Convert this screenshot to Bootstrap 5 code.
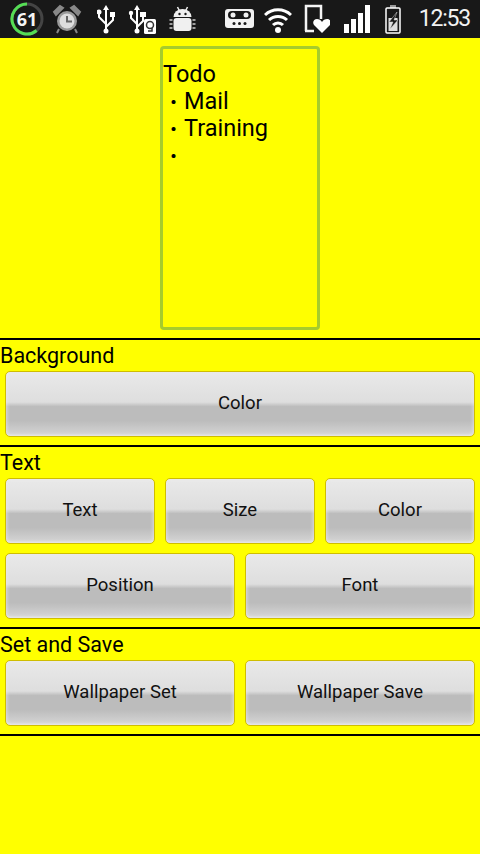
<!DOCTYPE html>
<html><head><meta charset="utf-8"><title>Wallpaper memo</title>
<link rel="stylesheet" href="https://cdn.jsdelivr.net/npm/bootstrap@5.3.0/dist/css/bootstrap.min.css">
<style>
html,body{height:854px;overflow:hidden}
body{background:#ff0;font-family:Roboto,"Noto Sans",sans-serif;color:#000}
.sbar{height:38px;background:#181818;color:#fff;padding:0 10px}
.sbar svg{display:block;flex:none}
.clock{font-size:23px;letter-spacing:-1.2px;line-height:38px;margin-left:auto;color:#f2f2f2;font-family:Roboto,sans-serif}
.stage{height:300px;padding-top:8px}
.memo{width:160px;height:284px;border:3px solid #a6cc2c;border-radius:4px;font-size:23.5px;line-height:27px;padding-top:12px}
.mline{height:27px;white-space:nowrap}
.bul{width:21px;flex:none;font-size:16px;font-family:"Noto Sans CJK JP",sans-serif;font-weight:700;text-align:center}
.sect{border-top:2px solid #000;padding:0 5px 6px}
.lbl{font-size:21.5px;line-height:28px;margin:0 -5px;height:31px;padding-top:2px}
.gbtn{height:66px;flex:1 1 0;min-width:0;padding:0 0 1px;border:1px solid #cfbd00;border-radius:5px;font-size:18.5px;color:#111;
background:linear-gradient(#e9e9e9 0,#dedede 47%,#bcbcbc 54%,#bcbcbc 76%,#d2d2d2 96%,#e2e2e2 100%);box-shadow:inset 0 0 4px #ececec}
.gbtn:hover,.gbtn:focus{color:#111;border-color:#cfbd00;background:linear-gradient(#e9e9e9 0,#dedede 47%,#bcbcbc 54%,#bcbcbc 76%,#d2d2d2 96%,#e2e2e2 100%)}
.rowg{gap:10px}
.rowg+.rowg{margin-top:9px}
.s-1{height:107px}.s-2{height:182px}.s-3{height:107px}
.endline{border-top:2px solid #000}
.ic-usb1{margin-left:15px}.ic-usb2{margin-left:13px}.ic-droid{margin-left:11px}.ic-vm{margin-left:29px}
.ic-wifi{margin-left:10px}.ic-heart{margin-left:12px}.ic-sig{margin-left:14px}.ic-bat{margin-left:15px}
</style></head><body>
<div class="sbar d-flex align-items-center">
<svg width="38" height="38" viewBox="0 0 38 38"><circle cx="17" cy="19" r="15" fill="none" stroke="#444" stroke-width="3"/><path d="M17 4A15 15 0 1 0 26.600 30.500" fill="none" stroke="#55dd55" stroke-width="3"/><text x="17" y="25.500" font-size="18" font-weight="700" fill="#f4f4f4" text-anchor="middle" font-family="Open Sans">61</text></svg>
<svg class="ms-1" width="30" height="32" viewBox="0 0 30 32"><circle cx="15" cy="18" r="10" fill="#999"/><circle cx="15" cy="18" r="7.500" fill="#ddd"/><path d="M15 13v5.500h5" fill="none" stroke="#666" stroke-width="2"/><path d="M2 9 8 3l3 2-7 7zM28 9l-6-6-3 2 7 7zM7 26l-2 4M23 26l2 4" fill="#888" stroke="#888" stroke-width="2"/></svg>
<svg class="ic-usb1" width="18" height="30" viewBox="1 0 18 30"><path d="M10 27V3M10 20 3 13V9M10 23l7-7v-5" fill="none" stroke="#fff" stroke-width="2"/><path d="M10 1l3 5H7z" fill="#fff"/><circle cx="10" cy="27" r="2.500" fill="#fff"/><circle cx="3" cy="8" r="2.500" fill="#fff"/><rect x="14" y="8" width="6" height="5" fill="#fff"/></svg>
<svg class="ic-usb2" width="30" height="30" viewBox="0 0 30 30"><path d="M9 27V3M9 20 3 14v-4M9 23l6-6v-5" fill="none" stroke="#fff" stroke-width="2"/><path d="M9 1l3 5H6z" fill="#fff"/><circle cx="9" cy="27" r="2.500" fill="#fff"/><circle cx="3" cy="9" r="2.200" fill="#fff"/><rect x="12" y="8" width="6" height="5" fill="#fff"/><rect x="16" y="15" width="12" height="15" rx="1.500" fill="#fff"/><circle cx="22" cy="21" r="3.500" fill="none" stroke="#333" stroke-width="1.500"/><path d="M24 24v3h-4" fill="none" stroke="#333" stroke-width="1.500"/></svg>
<svg class="ic-droid" width="27" height="28" viewBox="0 0 26 28"><path d="M4 12a9 8 0 0 1 18 0z" fill="#f0f0f0"/><path d="M8 2l2 4M18 2l-2 4" stroke="#eee" stroke-width="1.500"/><rect x="4" y="13" width="18" height="13" rx="3" fill="#f0f0f0"/><circle cx="10" cy="9" r="1.200" fill="#181818"/><circle cx="16" cy="9" r="1.200" fill="#181818"/><path d="M0 15h3M0 19h3M0 23h3M23 15h3M23 19h3M23 23h3" stroke="#ccc" stroke-width="1.500"/></svg>
<svg class="ic-vm" width="29" height="26" viewBox="0 0 29 26"><rect x="0" y="3" width="29" height="19" rx="3" fill="#f2f2f2"/><rect x="3" y="5" width="23" height="8" rx="4" fill="#181818"/><circle cx="8" cy="9" r="2.500" fill="#f2f2f2"/><circle cx="21" cy="9" r="2.500" fill="#f2f2f2"/><circle cx="9" cy="17.500" r="1.500" fill="#181818"/><circle cx="14.500" cy="17.500" r="1.500" fill="#181818"/><circle cx="20" cy="17.500" r="1.500" fill="#181818"/></svg>
<svg class="ic-wifi" width="28" height="28" viewBox="1 0 28 28"><path d="M2 10a19 19 0 0 1 26 0M6 15a13 13 0 0 1 18 0M10 20a7 7 0 0 1 10 0" fill="none" stroke="#fff" stroke-width="3"/><circle cx="15" cy="25" r="3" fill="#fff"/></svg>
<svg class="ic-heart" width="26" height="30" viewBox="0 0 26 30"><path d="M2 27V2h15v13" fill="none" stroke="#f4f4f4" stroke-width="2.500"/><path d="M1 27h9" stroke="#f4f4f4" stroke-width="2.500"/><path d="M18 29 10 21c-2-3 0-6 3-6 2 0 4 1 5 3 1-2 3-3 5-3 3 0 5 3 3 6z" fill="#fff"/></svg>
<svg class="ic-sig" width="26" height="30" viewBox="0 0 26 30"><rect x="0" y="20" width="5" height="9" fill="#fff"/><rect x="7" y="15" width="5" height="14" fill="#fff"/><rect x="14" y="9" width="5" height="20" fill="#fff"/><rect x="21" y="1" width="5" height="28" fill="#fff"/></svg>
<svg class="ic-bat" width="16" height="30" viewBox="0 0 16 30"><rect x="5" y="1" width="6" height="3" fill="#999"/><rect x="1" y="4" width="14" height="25" rx="1" fill="none" stroke="#fff" stroke-width="1.500"/><rect x="3.500" y="14" width="9" height="13" fill="#ddd"/><path d="M12 8 4 18h4l-3 7 8-9H9z" fill="#181818" stroke="#ddd" stroke-width=".5"/></svg>
<div class="clock">12:53</div>
</div>
<div class="stage d-flex justify-content-center"><div class="memo">
<div class="mline">Todo</div>
<div class="mline d-flex"><span class="bul">・</span><span>Mail</span></div>
<div class="mline d-flex"><span class="bul">・</span><span>Training</span></div>
<div class="mline d-flex"><span class="bul">・</span></div>
</div></div>
<div class="sect s-1"><div class="lbl">Background</div><div class="d-flex rowg"><button class="btn gbtn">Color</button></div></div>
<div class="sect s-2"><div class="lbl">Text</div>
<div class="d-flex rowg"><button class="btn gbtn">Text</button><button class="btn gbtn">Size</button><button class="btn gbtn">Color</button></div>
<div class="d-flex rowg"><button class="btn gbtn">Position</button><button class="btn gbtn">Font</button></div></div>
<div class="sect s-3"><div class="lbl">Set and Save</div><div class="d-flex rowg"><button class="btn gbtn">Wallpaper Set</button><button class="btn gbtn">Wallpaper Save</button></div></div>
<div class="endline"></div>
<script src="https://cdn.jsdelivr.net/npm/bootstrap@5.3.0/dist/js/bootstrap.bundle.min.js"></script>
</body></html>
